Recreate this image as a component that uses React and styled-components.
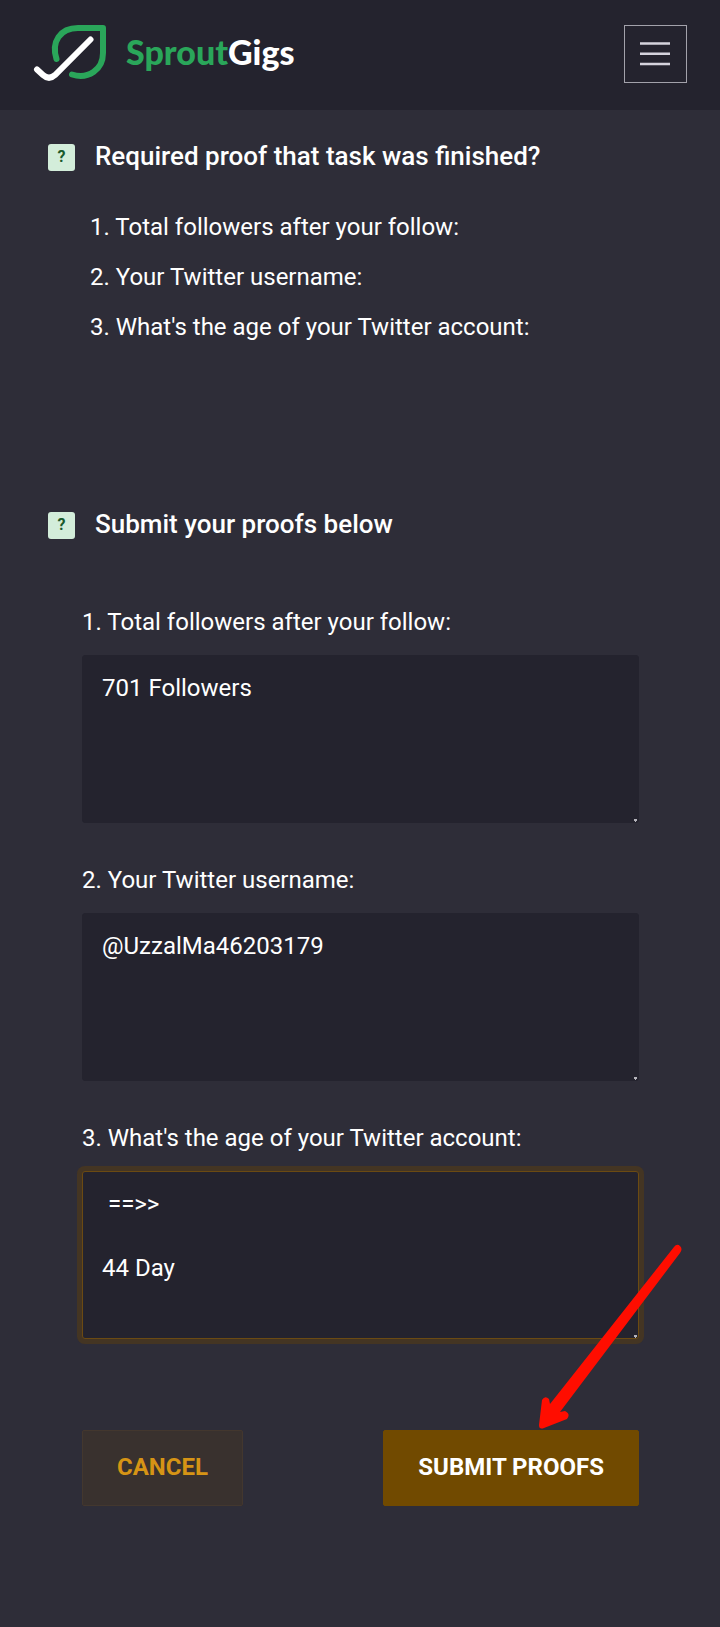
import React, { useState } from "react";
import styled, { createGlobalStyle } from "styled-components";

const GlobalStyle = createGlobalStyle`
  * {
    box-sizing: border-box;
  }
  body {
    margin: 0;
    background: #2e2d38;
    color: #fff;
    font-family: Roboto, "Liberation Sans", sans-serif;
    font-size: 24px;
    line-height: 32px;
  }
`;

const Nav = styled.nav`
  display: flex;
  align-items: center;
  justify-content: space-between;
  height: 110px;
  padding: 0 33px 2px;
  background: #24232e;
`;

const Brand = styled.a`
  display: flex;
  align-items: center;
  gap: 19px;
  color: #fff;
  font-family: Lato, sans-serif;
  font-size: 34px;
  font-weight: 900;
  line-height: 40px;
  text-decoration: none;

  div {
    padding-bottom: 4px;
  }
  span {
    color: #2aa65a;
  }
`;

const Toggler = styled.button`
  display: flex;
  align-items: center;
  justify-content: center;
  width: 63px;
  height: 58px;
  padding: 0;
  border: 1px solid #a3a2ab;
  background: none;
  cursor: pointer;
`;

const Main = styled.main`
  padding: 30px 48px 120px;
`;

const SectionHead = styled.div`
  display: flex;
  align-items: center;
  gap: 20px;
`;

const Badge = styled.span`
  width: 27px;
  height: 27px;
  border-radius: 3px;
  background: #d3edda;
  color: #1b5a2c;
  font-size: 16px;
  font-weight: 700;
  line-height: 25px;
  text-align: center;
`;

const Title = styled.h2`
  margin: 0;
  padding-bottom: 2px;
  font-size: 26px;
  font-weight: 500;
  line-height: 32px;
`;

const ProofList = styled.div`
  display: grid;
  gap: 18px;
  padding: 37px 42px 0;
  margin-bottom: 165px;

  p {
    margin: 0;
  }
`;

const Form = styled.form`
  padding: 64px 33px 0 34px;
`;

const Field = styled.div`
  margin-bottom: 41px;
`;

const Label = styled.label`
  display: block;
  margin-bottom: 17px;
`;

const TextBox = styled.div`
  position: relative;
`;

const TextArea = styled.textarea`
  display: block;
  width: 100%;
  height: 168px;
  padding: 16px 19px;
  border: 1px solid ${(p) => (p.$active ? "#6b4a12" : "#24232e")};
  border-radius: 3px;
  outline: none;
  box-shadow: ${(p) => (p.$active ? "0 0 0 5px #443523" : "none")};
  background: #24232e;
  color: #fff;
  font: inherit;
  resize: none;
`;

const Grip = styled.svg`
  position: absolute;
  right: 2px;
  bottom: 1px;
`;

const Actions = styled.div`
  position: relative;
  display: flex;
  justify-content: space-between;
  padding-top: 50px;
`;

const Button = styled.button`
  height: 76px;
  padding: 0 34px 2px;
  border: 1px solid ${(p) => (p.$primary ? "#714a00" : "#43372e")};
  border-radius: 2px;
  background: ${(p) => (p.$primary ? "#714a00" : "#39312e")};
  color: ${(p) => (p.$primary ? "#fff" : "#d69415")};
  font: inherit;
  font-weight: 700;
  text-transform: uppercase;
  cursor: pointer;
`;

const Arrow = styled.svg`
  position: absolute;
  right: -46px;
  bottom: 76px;
  pointer-events: none;
`;

const questions = [
  "Total followers after your follow:",
  "Your Twitter username:",
  "What's the age of your Twitter account:",
];

function Logo() {
  return (
    <svg width="74" height="58" viewBox="0 0 74 58" fill="none" strokeLinecap="round">
      <path
        d="M23.5 34C18 17 27 3 45 3H70V28C70 45 55 54.500 39 49.500"
        stroke="#2aa65a"
        strokeWidth="6"
        strokeLinejoin="round"
      />
      <path d="M4 44.500L10 50Q16 55.500 22 50L57.500 14.500" stroke="#fff" strokeWidth="6" />
    </svg>
  );
}

function App() {
  const [answers, setAnswers] = useState([
    "701 Followers",
    "@UzzalMa46203179",
    " ==>>\n\n44 Day",
  ]);
  const [active, setActive] = useState(2);

  const handleChange = (i, value) => {
    setAnswers(answers.map((a, n) => (n === i ? value : a)));
  };

  return (
    <>
      <GlobalStyle />
      <Nav>
        <Brand href="#home">
          <Logo />
          <div>
            <span>Sprout</span>Gigs
          </div>
        </Brand>
        <Toggler type="button" aria-label="Menu">
          <svg width="31" height="24" viewBox="0 0 31 24" stroke="#d5d3dd" strokeWidth="2.5">
            <path d="M0 1.500H30M0 11.750H30M0 22H30" />
          </svg>
        </Toggler>
      </Nav>
      <Main>
        <SectionHead>
          <Badge>?</Badge>
          <Title>Required proof that task was finished?</Title>
        </SectionHead>
        <ProofList>
          {questions.map((q, i) => (
            <p key={q}>
              {i + 1}. {q}
            </p>
          ))}
        </ProofList>

        <SectionHead>
          <Badge>?</Badge>
          <Title>Submit your proofs below</Title>
        </SectionHead>
        <Form onSubmit={(e) => e.preventDefault()}>
          {questions.map((q, i) => (
            <Field key={q}>
              <Label htmlFor={`proof-${i}`}>
                {i + 1}. {q}
              </Label>
              <TextBox>
                <TextArea
                  id={`proof-${i}`}
                  value={answers[i]}
                  $active={active === i}
                  onFocus={() => setActive(i)}
                  onChange={(e) => handleChange(i, e.target.value)}
                />
                <Grip width="3" height="3" viewBox="0 0 3 3">
                  <path d="M0 0H3V2H2V3H1V2H0Z" fill="#b5b4bb" />
                </Grip>
              </TextBox>
            </Field>
          ))}
          <Actions>
            <Button type="button">Cancel</Button>
            <Button type="submit" $primary>
              Submit Proofs
            </Button>
            {/* red pointer towards the submit button */}
            <Arrow width="150" height="186" viewBox="0 0 150 186">
              <path
                d="M139 3Q142 -1 145 2Q148 5 145 9L25 168L30 167Q36 170 32 175L9 184Q4 186 4 181L7 156Q10 151 14 155L15 160Z"
                fill="#ff0d00"
              />
            </Arrow>
          </Actions>
        </Form>
      </Main>
    </>
  );
}

export default App;
